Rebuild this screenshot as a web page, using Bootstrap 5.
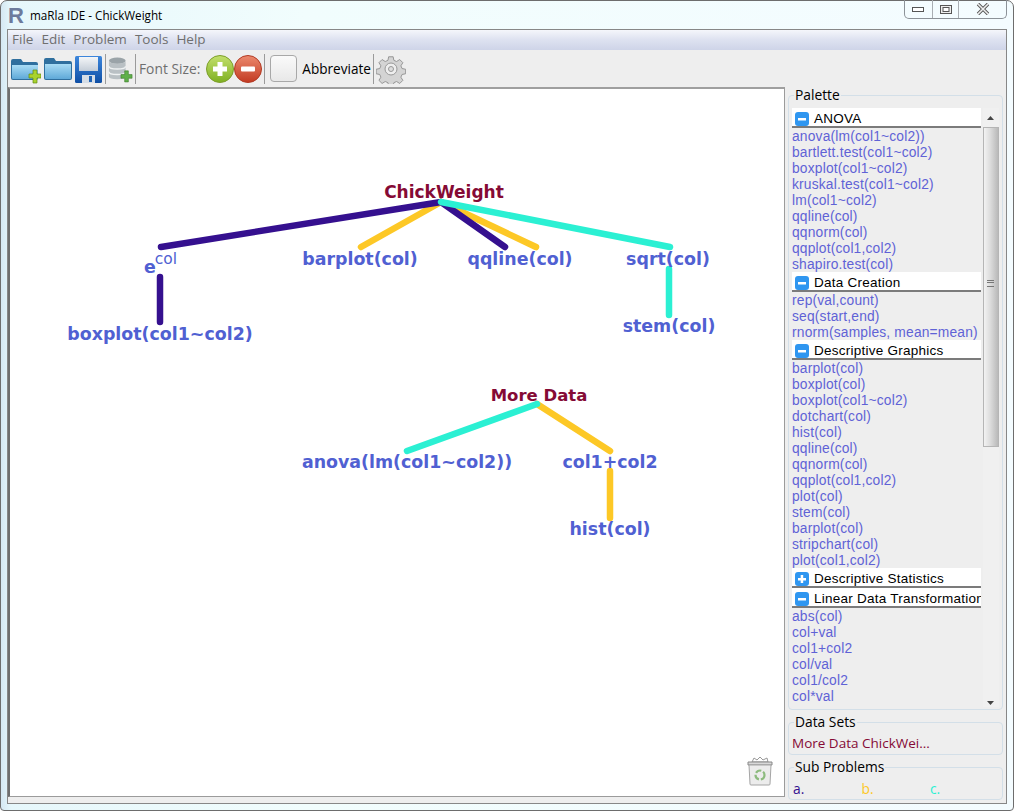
<!DOCTYPE html>
<html lang="en">
<head>
<meta charset="UTF-8">
<title>maRla IDE - ChickWeight</title>
<link rel="stylesheet" href="https://cdn.jsdelivr.net/npm/bootstrap@5.3.0/dist/css/bootstrap.min.css">
<style>
html, body { height: 100%; }
body { background: #fff; font-family: "Open Sans", sans-serif; overflow: hidden; }
.app-window { height: 811px; border: 1px solid #6d6d6d; border-radius: 7px 7px 4px 4px; background: linear-gradient(90deg, #d5e8f3 0, #e6f7fb 1%, #f1fdfd 30%, #f4fcff 100%); padding: 0 6px 6px 6px; }
.title-row { height: 28px; }
.title-text { font: 11.7px "Open Sans", sans-serif; color: #000; margin-left: 6px; padding-top: 2px; }
.r-logo { font: bold 22px "Liberation Sans", sans-serif; color: #6d7b9c; width: 16px; margin-left: 1px; line-height: 21px; }
.win-btns { width: 103px; height: 19px; margin-top: -1px; border: 1px solid #8c9298; border-top: 0; border-radius: 0 0 5px 5px; }
.win-btns > div { border-right: 1px solid #a9aeb3; height: 100%; }
.win-btns > div:last-child { border-right: 0; }
.w-min { width: 28px; }
.w-max { width: 27px; }
.w-close { width: 47px; }
.app-frame { height: 775px; border: 1px solid #878787; background: #eeeeee; }
.menu-row { height: 20px; background: linear-gradient(180deg, #f5f6fb 0, #dfe3f1 45%, #ced4e8 100%); color: #6f6f6f; font: 13.5px "Open Sans", sans-serif; padding-left: 4px; gap: 8px; line-height: 19px; }
.tool-row { height: 37px; padding-left: 2px; background: #eeeeee; }
.tool-sep { width: 1px; height: 30px; background: #9a9a9a; margin: 0 2px; }
.font-lbl { font: 13.8px "Open Sans", sans-serif; color: #6f6f6f; margin: 0 6px 0 1px; }
.abbr-lbl { font: 13.6px "Open Sans", sans-serif; color: #000; }
.empty-btn { width: 27px; height: 27px; padding: 0; border: 1px solid #a8a8a8; border-radius: 4px; background: linear-gradient(180deg, #fafafa, #e8e8e8); margin: 0 5px 0 3px; }
.main-row { height: 716px; }
.draw-area { width: 777px; height: 710px; background: #fff; border: 1px solid #9b9b9b; border-left: 2px solid #6e6e6e; border-top: 2px solid #9f9f9f; position: relative; }
.draw-area svg.tree { display: block; }
.tree text { font-family: "DejaVu Sans", sans-serif; font-weight: 700; font-size: 17.4px; fill: #5060d2; text-anchor: middle; }
.tree text.ds { fill: #850a35; font-size: 17px; }
.tree text.ds2 { fill: #850a35; font-size: 16.5px; }
.tree text.sup { font-weight: 400; font-size: 15.5px; }
.bin-icon { position: absolute; right: 11px; bottom: 10px; }
.side-col { width: 215px; margin-left: 3px; margin-top: 8px; }
.side-box { position: relative; border: 1px solid #d3dfe8; border-radius: 4px; }
.side-title { position: absolute; top: -9px; left: 5px; font: 13.8px/16px "Open Sans", sans-serif; color: #000; background: #eeeeee; padding: 0 1px; }
.palette-box { height: 615px; padding: 12px 3px 0 3px; margin-bottom: 12px; }
.data-box { height: 33px; margin-bottom: 12px; font: 13.5px/16px "Open Sans", sans-serif; color: #850a35; padding: 12px 0 0 3px; }
.sub-box { height: 33px; padding: 13px 0 0 4px; font: 13.8px/16px "Open Sans", sans-serif; }
.sub-box span { width: 68.5px; display: inline-block; }
.pal-list { width: 191px; height: 599px; overflow: hidden; }
.pal-head { height: 20px; background: #fff; border-bottom: 2px solid #7b7b7b; font: 13.5px/18px "Liberation Sans", sans-serif; letter-spacing: .25px; color: #000; padding: 3px 0 0 3px; }
.pal-head svg { margin-right: 5px; }
.pal-item { height: 16px; font: 13.8px/18px "Liberation Sans", sans-serif; letter-spacing: .18px; color: #5f62d6; white-space: nowrap; }
.pal-scroll { width: 16px; height: 599px; margin-left: 2px; background: #f0f0f0; }
.s-arrow { height: 11px; text-align: center; line-height: 10px; }
.s-arrow.s-up { height: 19px; line-height: 16px; }
.s-thumb { height: 320px; border: 1px solid #b5b5b5; background: linear-gradient(90deg, #f2f2f2, #dcdcdc 45%, #b9b9b9); position: relative; }
.s-grip { position: absolute; top: 152px; left: 3px; width: 7px; height: 7px; border-top: 1px solid #777; border-bottom: 1px solid #777; }
.s-grip::after { content: ""; display: block; height: 3px; margin-top: 1px; border-top: 1px solid #777; }
.s-rest { height: 249px; }
.tool-gap { margin-left: 2px; }
</style>
</head>
<body>
<div class="app-window d-flex flex-column">
    <div class="title-row d-flex align-items-start">
        <div class="r-logo mt-1">R</div>
        <div class="title-text mt-1">maRla IDE - ChickWeight</div>
        <div class="win-btns d-flex ms-auto">
            <div class="w-min d-flex align-items-center justify-content-center">
                <svg width="14" height="8"><rect x="1.5" y="2.5" width="11" height="4" fill="#fff" stroke="#555"/></svg>
            </div>
            <div class="w-max d-flex align-items-center justify-content-center">
                <svg width="14" height="11"><rect x="1.5" y="1.5" width="11" height="8" fill="#eee" stroke="#555"/><rect x="4" y="3.5" width="6" height="4" fill="#fff" stroke="#555"/></svg>
            </div>
            <div class="w-close d-flex align-items-center justify-content-center">
                <svg width="14" height="12"><path d="M2 1L12 11M12 1L2 11" stroke="#555" stroke-width="3.4"/><path d="M2 1L12 11M12 1L2 11" stroke="#eee" stroke-width="1.6"/></svg>
            </div>
        </div>
    </div>

    <div class="app-frame d-flex flex-column">
        <div class="menu-row d-flex">
            <span>File</span><span>Edit</span><span>Problem</span><span>Tools</span><span>Help</span>
        </div>

        <div class="tool-row d-flex align-items-center">
            <svg width="0" height="0" class="position-absolute">
                <defs>
                    <linearGradient id="fold" x1="0" y1="0" x2="0" y2="1"><stop offset="0" stop-color="#a9dcf5"/><stop offset="1" stop-color="#5fa9d8"/></linearGradient>
                    <linearGradient id="disk" x1="0" y1="0" x2="0" y2="1"><stop offset="0" stop-color="#3c86dc"/><stop offset="1" stop-color="#0f4fa5"/></linearGradient>
                    <linearGradient id="label" x1="0" y1="0" x2="0" y2="1"><stop offset="0" stop-color="#f4f6f8"/><stop offset="1" stop-color="#c4cdd8"/></linearGradient>
                    <linearGradient id="grn" x1="0" y1="0" x2="0" y2="1"><stop offset="0" stop-color="#c3e06c"/><stop offset="1" stop-color="#7fb022"/></linearGradient>
                    <linearGradient id="rd" x1="0" y1="0" x2="0" y2="1"><stop offset="0" stop-color="#ec8a6e"/><stop offset="1" stop-color="#c23a22"/></linearGradient>
                </defs>
            </svg>
            <svg width="31" height="30" viewBox="0 0 31 30"><path d="M1 7q0-2 2-2h8l2 3h13q2 0 2 2v14q0 2-2 2H3q-2 0-2-2z" fill="#2f6f9e"/><path d="M2 11h26v13q0 1-1 1H3q-1 0-1-1z" fill="url(#fold)"/><path d="M19 20h4v-4h4v4h4v4h-4v5h-4v-5h-4z" fill="#a9d22d" stroke="#5f8a12" stroke-width=".7"/></svg>
            <svg class="tool-gap" width="31" height="30" viewBox="0 0 31 30"><path d="M1 6q0-2 2-2h8l2 3h14q2 0 2 2v15q0 2-2 2H3q-2 0-2-2z" fill="#2f6f9e"/><path d="M2 10h26v14q0 1-1 1H3q-1 0-1-1z" fill="url(#fold)"/></svg>
            <svg width="29" height="30" viewBox="0 0 29 30"><rect x="1" y="2" width="27" height="27" rx="1.500" fill="url(#disk)"/><rect x="5" y="3" width="19" height="14" fill="url(#label)"/><rect x="8" y="21" width="13" height="8" fill="#d5dde6"/><rect x="15" y="22" width="3" height="6" fill="#1f63b5"/></svg>
            <div class="tool-sep"></div>
            <svg width="25" height="30" viewBox="1 0 27 30"><ellipse cx="11" cy="6" rx="9" ry="3.5" fill="#9aa3a8"/><path d="M2 6v17q0 3 9 3t9-3V6q0 3-9 3T2 6z" fill="#b9c0c4"/><path d="M2 12q0 3 9 3t9-3M2 18q0 3 9 3t9-3" stroke="#eef1f2" stroke-width="1.6" fill="none"/><path d="M15 21h4v-4h4v4h4v4h-4v4h-4v-4h-4z" fill="#5fb04a" stroke="#39782a" stroke-width=".6"/></svg>
            <div class="tool-sep"></div>
            <span class="font-lbl">Font Size:</span>
            <svg width="28" height="28" viewBox="0 0 28 28"><circle cx="14" cy="14" r="13.5" fill="url(#grn)" stroke="#7c9e2a"/><path d="M11.500 7h5v4.500H21v5h-4.500V21h-5v-4.500H7v-5h4.500z" fill="#fff"/></svg>
            <svg width="28" height="28" viewBox="0 0 28 28"><circle cx="14" cy="14" r="13.5" fill="url(#rd)" stroke="#b23a24"/><rect x="7" y="11.500" width="14" height="5" rx="1" fill="#fff"/></svg>
            <div class="tool-sep"></div>
            <button class="empty-btn" type="button" aria-label="Abbreviate"></button>
            <span class="abbr-lbl">Abbreviate</span>
            <div class="tool-sep"></div>
            <svg width="30" height="30" viewBox="0 0 30 30"><path d="M12.500 1.500h5l.8 4 3 1.300 3.500-2.200 3.500 3.500-2.200 3.500 1.300 3 4 .8v5l-4 .8-1.300 3 2.200 3.500-3.500 3.500-3.500-2.200-3 1.300-.8 4h-5l-.8-4-3-1.300-3.500 2.200-3.500-3.500 2.200-3.500-1.300-3-4-.8v-5l4-.8 1.300-3-2.200-3.500 3.500-3.500 3.500 2.200 3-1.300z" transform="translate(1.400 1.400) scale(.9)" fill="#d4d4d4" stroke="#8f8f8f"/><circle cx="15" cy="15" r="6" fill="#eee" stroke="#999"/><circle cx="15" cy="15" r="2.500" fill="#ddd" stroke="#999"/></svg>
        </div>

        <div class="main-row d-flex">
            <div class="draw-area">
                <svg class="tree" width="775" height="707" viewBox="10 89 775 707">
                    <g stroke-width="6.5" stroke-linecap="round" fill="none">
                        <path d="M441 202L361 247M441 202L536 247M610 471V518M537 404L610 451" stroke="#fdc826"/>
                        <path d="M441 202L161 247M160 277V322M441 202L505 247" stroke="#35108f"/>
                        <path d="M441 202L670 247M669 269V315M537 404L407 451" stroke="#2bf0d3"/>
                    </g>
                    <text class="ds" x="444" y="198">ChickWeight</text>
                    <text x="360" y="265">barplot(col)</text>
                    <text x="520" y="265">qqline(col)</text>
                    <text x="668" y="265">sqrt(col)</text>
                    <text x="150" y="273">e</text>
                    <text class="sup" x="166" y="264">col</text>
                    <text x="160" y="340">boxplot(col1~col2)</text>
                    <text x="669" y="332">stem(col)</text>
                    <text class="ds2" x="539" y="401">More Data</text>
                    <text x="407" y="468">anova(lm(col1~col2))</text>
                    <text x="610" y="468">col1+col2</text>
                    <text x="610" y="535">hist(col)</text>
                </svg>
                <svg class="bin-icon" width="26" height="30" viewBox="0 0 26 30"><path d="M5 6l2-4 3 2 3-3 3 3 4-2 1 4z" fill="#fff" stroke="#999"/><path d="M1 6h24v3H1z" fill="#d8d8d8" stroke="#888"/><path d="M2 9h22l-1 19q0 1-1 1H4q-1 0-1-1z" fill="#ececec" stroke="#a5a5a5"/><circle cx="13" cy="19" r="4.500" fill="none" stroke="#8dbb7e" stroke-width="2.200" stroke-dasharray="6 2"/></svg>
            </div>

            <div class="side-col">
                <div class="side-box palette-box">
                    <div class="side-title">Palette</div>
                    <div class="d-flex">
                        <div class="pal-list" id="palette"></div>
                        <div class="pal-scroll">
                            <div class="s-arrow s-up"><svg width="8" height="8"><path d="M0 6h7L3.500 2z" fill="#444"/></svg></div>
                            <div class="s-thumb"><div class="s-grip"></div></div>
                            <div class="s-rest"></div>
                            <div class="s-arrow"><svg width="8" height="8"><path d="M0 2h7L3.500 6z" fill="#444"/></svg></div>
                        </div>
                    </div>
                </div>
                <div class="side-box data-box">
                    <div class="side-title">Data Sets</div>
                    More Data ChickWei...
                </div>
                <div class="side-box sub-box">
                    <div class="side-title">Sub Problems</div>
                    <span style="color:#35108f">a.</span><span style="color:#fdc826">b.</span><span style="color:#2bf0d3">c.</span>
                </div>
            </div>
        </div>
    </div>
</div>

<script>
const groups = [
    ["ANOVA", "minus", ["anova(lm(col1~col2))", "bartlett.test(col1~col2)", "boxplot(col1~col2)", "kruskal.test(col1~col2)", "lm(col1~col2)", "qqline(col)", "qqnorm(col)", "qqplot(col1,col2)", "shapiro.test(col)"]],
    ["Data Creation", "minus", ["rep(val,count)", "seq(start,end)", "rnorm(samples, mean=mean)"]],
    ["Descriptive Graphics", "minus", ["barplot(col)", "boxplot(col)", "boxplot(col1~col2)", "dotchart(col)", "hist(col)", "qqline(col)", "qqnorm(col)", "qqplot(col1,col2)", "plot(col)", "stem(col)", "barplot(col)", "stripchart(col)", "plot(col1,col2)"]],
    ["Descriptive Statistics", "plus", []],
    ["Linear Data Transformation", "minus", ["abs(col)", "col+val", "col1+col2", "col/val", "col1/col2", "col*val"]]
];
const bar = '<rect x="3" y="6" width="8" height="2.500" fill="#fff"/>';
const vbar = '<rect x="5.700" y="3" width="2.500" height="8" fill="#fff"/>';
let html = "";
for (const [name, kind, items] of groups) {
    html += `<div class="pal-head d-flex align-items-center"><svg width="14" height="14" class="flex-shrink-0"><rect width="14" height="14" rx="3" fill="#2f96f0"/>${bar}${kind == "plus" ? vbar : ""}</svg><span class="text-nowrap">${name}</span></div>`;
    for (const item of items) html += `<div class="pal-item">${item}</div>`;
}
document.getElementById("palette").innerHTML = html;
</script>
<script src="https://cdn.jsdelivr.net/npm/bootstrap@5.3.0/dist/js/bootstrap.bundle.min.js"></script>
</body>
</html>
